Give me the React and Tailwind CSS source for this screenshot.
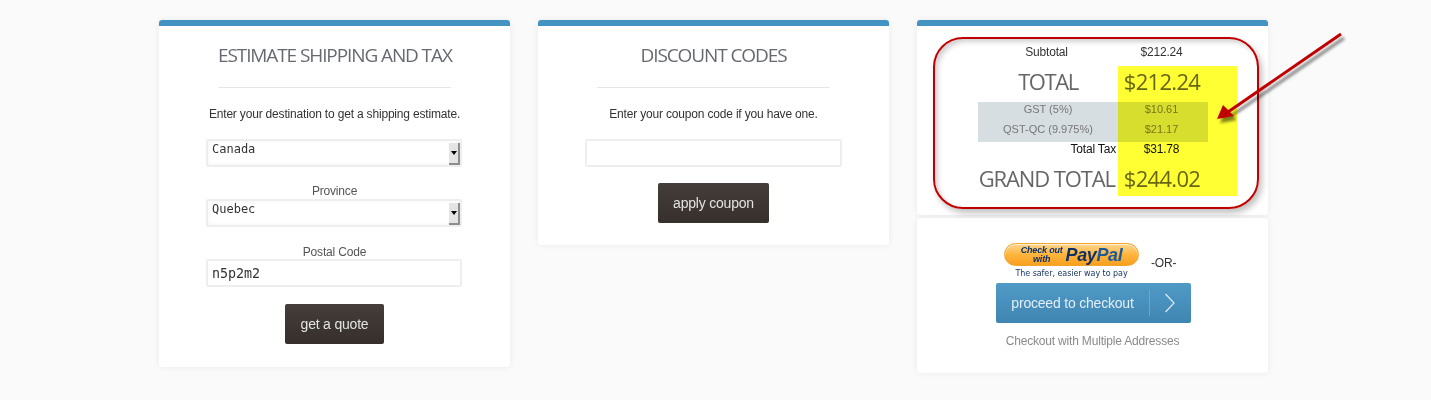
const OPEN = "font-['Open_Sans',sans-serif]";

function Card({ children, className = "" }) {
  return (
    <div className={`bg-white rounded-[3px] shadow-[0_0_6px_rgba(0,0,0,0.07)] ${className}`}>
      {children}
    </div>
  );
}

function TopBar() {
  return <div className="h-[6px] rounded-t-[3px] bg-[#4393c3]" />;
}

function Heading({ children }) {
  return (
    <div className="mx-[59px] h-[62px] border-b border-[#e6e6e6] text-center">
      <h2 className={`${OPEN} pt-[17px] text-[19px] leading-[24px] font-normal tracking-[-1.1px] whitespace-nowrap text-[#666a70]`}>
        {children}
      </h2>
    </div>
  );
}

function Select({ value }) {
  return (
    <div className="relative ml-[47px] h-[28px] w-[256px]">
      <select
        defaultValue={value}
        className="block h-[28px] w-full appearance-none rounded-[2px] border-2 border-[#eeeeee] bg-white pb-[8px] pl-[4px] font-['DejaVu_Sans_Mono',monospace] text-[12px] leading-[14px] tracking-normal text-[#333333] shadow-[inset_0_0_4px_rgba(0,0,0,0.05)]"
      >
        <option>{value}</option>
      </select>
      <div className="absolute top-[4px] right-[2px] flex h-[22px] w-[11px] items-center justify-center border-r-2 border-b-2 border-[#8d8d8d] bg-[#e4e4e4]">
        <div className="h-0 w-0 border-x-[3px] border-t-[4px] border-x-transparent border-t-black" />
      </div>
    </div>
  );
}

function DarkButton({ children, className = "" }) {
  return (
    <button className={`block mx-auto h-[40px] rounded-[2px] bg-gradient-to-b from-[#453d3a] to-[#362f2c] text-center font-['Liberation_Sans',sans-serif] text-[14px] tracking-[-0.2px] text-[#e3e3e3] ${className}`}>
      {children}
    </button>
  );
}

function TotalRow({ label, value, rowClass, labelClass, valueClass }) {
  return (
    <div className={`grid grid-cols-[140px_90px] ${rowClass}`}>
      <div className={labelClass}>{label}</div>
      <div className={valueClass}>{value}</div>
    </div>
  );
}

function PayPal() {
  return (
    <div className="w-[135px]">
      <div className="flex h-[23px] items-center justify-center gap-[3px] rounded-full border border-[#f1a52e] bg-gradient-to-b from-[#fdd58a] via-[#fdb53c] to-[#f99f1c] font-['Liberation_Sans',sans-serif] italic text-[#0e3168] shadow-[inset_0_1px_1px_rgba(255,255,255,0.7)]">
        <span className="text-center text-[9px] leading-[9px] font-bold">
          Check out
          <br />
          with
        </span>
        <span className="text-[18px] leading-[20px] font-bold tracking-[-0.4px]">
          Pay<span className="text-[#1a5a9c]">Pal</span>
        </span>
      </div>
      <div className="mt-[2px] text-center font-['DejaVu_Sans',sans-serif] text-[8px] leading-[12px] tracking-[-0.05px] whitespace-nowrap text-[#12315e]">
        The safer, easier way to pay
      </div>
    </div>
  );
}

export default function App() {
  return (
    <div className="relative h-[400px] overflow-hidden bg-[#fafafa] font-['Liberation_Sans',sans-serif] text-[12px] tracking-[-0.18px]">
      <div className="flex items-start gap-[28px] pt-[20px] pl-[159px]">
        <Card className="h-[347px] w-[351px]">
          <TopBar />
          <Heading>ESTIMATE SHIPPING AND TAX</Heading>
          <p className="mt-[19px] mb-[18px] text-center leading-[14px] text-[#333333]">
            Enter your destination to get a shipping estimate.
          </p>
          <Select value="Canada" />
          <div className="mt-[17px] mb-[1px] text-center leading-[14px] text-[#555555]">Province</div>
          <Select value="Quebec" />
          <div className="mt-[18px] text-center leading-[14px] text-[#555555]">Postal Code</div>
          <div className="ml-[47px] w-[256px]">
            <input
              defaultValue="n5p2m2"
              className="block h-[28px] w-full rounded-[2px] border-2 border-[#eeeeee] bg-white pl-[4px] font-['DejaVu_Sans_Mono',monospace] text-[13.33px] tracking-normal text-[#333333]"
            />
          </div>
          <DarkButton className="mt-[17px] w-[99px]">get a quote</DarkButton>
        </Card>

        <Card className="h-[225px] w-[351px]">
          <TopBar />
          <Heading>DISCOUNT CODES</Heading>
          <p className="mt-[19px] mb-[18px] text-center leading-[14px] text-[#333333]">
            Enter your coupon code if you have one.
          </p>
          <div className="ml-[47px] w-[257px]">
            <input className="block h-[28px] w-full rounded-[2px] border-2 border-[#eeeeee] bg-white" />
          </div>
          <DarkButton className="mt-[16px] w-[111px]">apply coupon</DarkButton>
        </Card>

        <div className="w-[351px]">
          <Card className="h-[195px]">
            <TopBar />
            <div className="w-[291px] pt-[16px] pl-[61px] text-[#333333]">
              <TotalRow
                label="Subtotal"
                value="$212.24"
                rowClass="h-[24px] leading-[20px]"
                labelClass="pr-[3px] text-center"
                valueClass="pr-[3px] text-center"
              />
              <TotalRow
                label="TOTAL"
                value="$212.24"
                rowClass={`h-[36px] text-[22px] leading-[30px] text-[#666666] ${OPEN}`}
                labelClass="text-center tracking-[-1.4px]"
                valueClass="pr-[2px] text-center tracking-[-0.7px]"
              />
              <div className="bg-[#d7dee1] text-[11px] leading-[15px] tracking-normal text-[#777777]">
                <TotalRow label="GST (5%)" value="$10.61" rowClass="h-[20px]" labelClass="text-center" valueClass="pr-[3px] text-center" />
                <TotalRow label="QST-QC (9.975%)" value="$21.17" rowClass="h-[20px]" labelClass="text-center" valueClass="pr-[3px] text-center" />
              </div>
              <TotalRow
                label="Total Tax"
                value="$31.78"
                rowClass="h-[18px] leading-[15px] text-[#111111]"
                labelClass="pr-[2px] text-right"
                valueClass="pr-[3px] text-center"
              />
              <TotalRow
                label="GRAND TOTAL"
                value="$244.02"
                rowClass={`h-[36px] text-[22px] leading-[37px] whitespace-nowrap text-[#666666] ${OPEN}`}
                labelClass="pr-[3px] text-right tracking-[-1.1px]"
                valueClass="pr-[2px] text-center tracking-[-0.7px]"
              />
            </div>
          </Card>
          <Card className="mt-[3px] h-[155px] pt-[25px]">
            <div className="flex items-start pl-[87px]">
              <PayPal />
              <div className="mt-[13px] ml-[12px] leading-[14px] text-[#333333]">-OR-</div>
            </div>
            <button className="mt-[3px] ml-[79px] flex h-[40px] w-[195px] items-center rounded-[2px] bg-gradient-to-b from-[#509ac6] to-[#3f85b2] text-[14px] tracking-[-0.2px] text-[#e3eef5]">
              <span className="w-[153px] text-center">proceed to checkout</span>
              <span className="flex h-[26px] items-center border-l border-[#6aa8ce] pl-[14px]">
                <svg width="12" height="20" viewBox="0 0 12 20" fill="none" stroke="#dcebf4" strokeWidth="1.2">
                  <path d="M1.5 1 L10 10 L1.5 19" />
                </svg>
              </span>
            </button>
            <div className="mt-[11px] text-center leading-[14px] text-[#8a8a8a]">
              Checkout with Multiple Addresses
            </div>
          </Card>
        </div>
      </div>

      {/* annotations laid over the screenshot */}
      <div className="absolute top-[66px] left-[1118px] h-[130px] w-[119px] bg-[#ffff33] mix-blend-multiply" />
      <div className="absolute top-[37px] left-[933px] h-[172px] w-[326px] rounded-[30px] border-2 border-[#c00000] shadow-[3px_4px_6px_rgba(0,0,0,0.25),inset_3px_3px_5px_rgba(0,0,0,0.18)]" />
      <svg className="absolute top-0 left-0" width="1431" height="400" fill="none">
        <defs>
          <filter id="blur" x="-20%" y="-20%" width="140%" height="140%">
            <feGaussianBlur stdDeviation="1.5" />
          </filter>
        </defs>
        <g transform="translate(3 4)" filter="url(#blur)" opacity="0.5">
          <path d="M1341 34 L1228 112" stroke="#000" strokeWidth="3" />
          <path d="M1217 119 L1223 105 L1234 116 Z" fill="#000" />
        </g>
        <path d="M1341 34 L1228 112" stroke="#c00000" strokeWidth="3" />
        <path d="M1217 119 L1223 105 L1234 116 Z" fill="#c00000" />
      </svg>
    </div>
  );
}
